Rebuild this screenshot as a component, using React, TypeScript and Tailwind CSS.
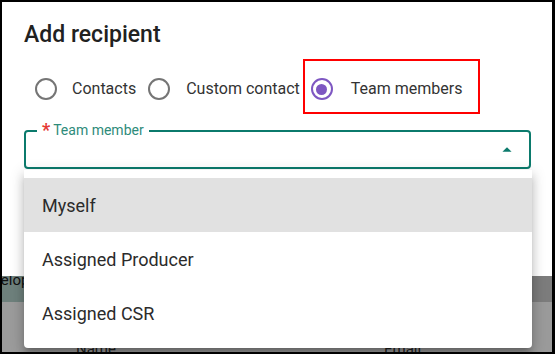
import React from 'react';

const Radio = ({ checked }: { checked?: boolean }) =>
  checked ? (
    <span className="flex h-[22px] w-[22px] shrink-0 items-center justify-center rounded-full border-[2px] border-[#7e57c2]">
      <span className="h-[11px] w-[11px] rounded-full bg-[#7e57c2]" />
    </span>
  ) : (
    <span className="block h-[22px] w-[22px] shrink-0 rounded-full border-[2px] border-[#757575]" />
  );

const menuItems = ['Myself', 'Assigned Producer', 'Assigned CSR'];

export default function App() {
  return (
    <div
      className="h-[354px] w-[555px] overflow-hidden border-t-[2px] border-r-[3px] border-b-[2px] border-l-[2px] border-black bg-black"
      style={{ fontFamily: 'Roboto, "Noto Sans", sans-serif' }}
    >
      <div className="relative flex h-full flex-col">
        {/* dialog */}
        <div className="h-[274px] shrink-0 bg-white">
          <h2 className="ml-[22px] mt-[19px] text-[23px] font-medium leading-[28px] text-[#212121]">
            Add recipient
          </h2>

          <div className="ml-[33px] mt-[29px] flex h-[22px] items-center text-[16px] text-[#333]">
            <Radio />
            <span className="ml-[15px]">Contacts</span>
            <span className="ml-[12px] flex">
              <Radio />
            </span>
            <span className="ml-[16px] whitespace-nowrap">Custom contact</span>
            <span className="ml-[11px] flex">
              <Radio checked />
            </span>
            <span className="ml-[18px] whitespace-nowrap">Team members</span>
          </div>

          <div className="relative ml-[22px] mt-[30px] h-[39px] w-[507px] rounded-[4px] border-[2px] border-[#0b7a6c]">
            <span className="absolute left-[11px] top-[-11px] flex items-center bg-white px-[5px] text-[14px] leading-[18px] text-[#2e8b7a]">
              <span className="mr-[3px] text-[18px] font-bold leading-[18px] text-[#e53935]">*</span>
              Team member
            </span>
            <svg
              viewBox="0 0 24 24"
              className="absolute right-[11px] top-[7px] h-[22px] w-[22px]"
              fill="#0b7a6c"
            >
              <path d="m7 14 5-5 5 5z" />
            </svg>
          </div>
        </div>

        {/* dimmed page behind the dialog */}
        <div className="flex flex-1 flex-col bg-[#8f8f8f]">
          <div className="flex h-[26px] shrink-0">
            <div className="w-[22px] overflow-hidden bg-[#6e807c]">
              <span className="ml-[-26px] mt-[-3px] block whitespace-nowrap text-[15px] leading-[14px] text-[#111]">
                Develop
              </span>
            </div>
            <div className="flex-1 bg-[#7c7c7c]" />
          </div>
          <div className="flex flex-1">
            <div className="w-[22px] bg-[#9b9b9b]" />
            <div className="flex flex-1 items-end bg-[#9a9a9a] text-[15px] leading-[6px] text-[#222]">
              <span className="ml-[52px]">Name</span>
              <span className="ml-[268px]">Email</span>
            </div>
          </div>
        </div>

        {/* open select menu */}
        <div className="absolute left-[22px] top-[168px] w-[508px] rounded-b-[4px] bg-white py-[8px] shadow-[0_5px_5px_-3px_rgba(0,0,0,0.2),0_8px_10px_1px_rgba(0,0,0,0.14),0_3px_14px_2px_rgba(0,0,0,0.12)]">
          {menuItems.map((item, i) => (
            <div
              key={item}
              className={`flex h-[54px] items-center px-[18px] text-[18px] text-[#2b2b2b] ${
                i === 0 ? 'bg-[#e1e1e1]' : ''
              }`}
            >
              {item}
            </div>
          ))}
        </div>

        {/* highlight annotation */}
        <div className="absolute left-[301px] top-[57px] h-[55px] w-[177px] border-[2px] border-[#ff0000]" />
      </div>
    </div>
  );
}
